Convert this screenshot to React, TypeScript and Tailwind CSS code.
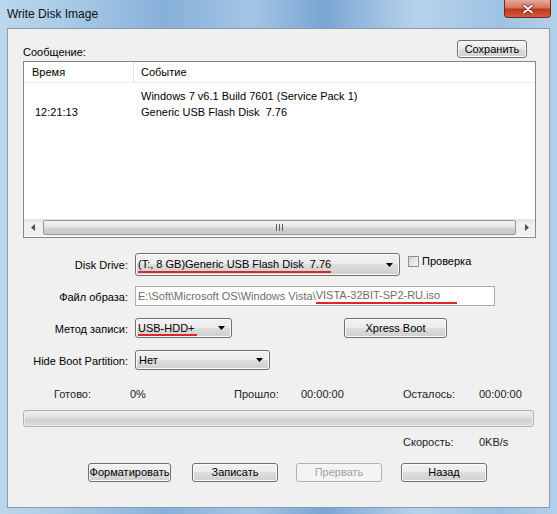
import React from 'react';

const face =
  'flex items-center rounded-[3px] border border-[#707070] bg-[linear-gradient(to_bottom,#f2f2f2_0%,#ebebeb_49%,#dddddd_50%,#cfcfcf_100%)] shadow-[inset_0_0_0_1px_#fbfbfb]';
const btn = `${face} justify-center`;

function DownArrow() {
  return (
    <svg width="7" height="4" viewBox="0 0 7 4">
      <path d="M0 0h7L3.5 4z" fill="#000" />
    </svg>
  );
}

function Combo({ className, children }: { className: string; children: React.ReactNode }) {
  return (
    <div className={`${face} ${className} justify-between pl-[2px] pr-[6px]`}>
      <span className="whitespace-pre leading-[13px]">{children}</span>
      <DownArrow />
    </div>
  );
}

function FormRow({ label, children, className = '' }: { label: string; children: React.ReactNode; className?: string }) {
  return (
    <div className={`flex items-center ${className}`}>
      <span className="w-[105px] text-right pt-[2px] leading-[13px] shrink-0">{label}</span>
      <div className="ml-[7px] flex items-center">{children}</div>
    </div>
  );
}

export default function App() {
  return (
    <div className="w-[557px] h-[514px] flex flex-col overflow-hidden px-[7px] pb-[6px] font-['Liberation_Sans',Arial,sans-serif] text-[11px] text-black bg-[linear-gradient(90deg,#bcd7ec_0%,#a9cae6_12%,#87b0d9_30%,#a4c6e5_45%,#7aa6d3_58%,#b7d3eb_75%,#9dc2e3_90%,#b3d0ea_100%)]">
      {/* Title bar */}
      <div className="h-[28px] flex items-start justify-between shrink-0">
        <span className="pt-[7px] text-[12px] leading-[14px] text-[#111]">Write Disk Image</span>
        <div className="w-[47px] h-[18px] -mr-[1px] flex items-center justify-center rounded-b-[4px] border border-t-0 border-[#6e2a22] bg-[linear-gradient(to_bottom,#e9a99c_0%,#d9735f_45%,#c0361f_55%,#d45a43_100%)]">
          <svg width="12" height="10" viewBox="0 0 12 10">
            <path d="M2 1.5l8 7M10 1.5l-8 7" stroke="#5a1a12" strokeWidth="3.2" strokeLinecap="round" />
            <path d="M2 1.5l8 7M10 1.5l-8 7" stroke="#fff" strokeWidth="2" strokeLinecap="round" />
          </svg>
        </div>
      </div>

      {/* Client area */}
      <div className="flex-1 flex flex-col bg-[#f0f0f0] border border-[#8a9bb0] pl-[15px] pr-[13px]">
        {/* Message header */}
        <div className="flex items-start justify-between mt-[11px] h-[18px]">
          <span className="mt-[6px] leading-[13px]">Сообщение:</span>
          <div className={`${btn} w-[70px] h-[18px] mr-[9px]`}>Сохранить</div>
        </div>

        {/* Log list */}
        <div className="mt-[3px] h-[177px] bg-white border border-[#828790] flex flex-col">
          <div className="h-[21px] flex shrink-0 border-b border-[#efefef]">
            <div className="w-[110px] border-r border-[#e3e3e3] pl-[8px] flex items-center">Время</div>
            <div className="pl-[7px] flex items-center">Событие</div>
          </div>
          <div className="flex-1 pt-[5px]">
            <div className="h-[16px] flex items-center">
              <span className="w-[110px] pl-[11px]"></span>
              <span className="pl-[7px]">Windows 7 v6.1 Build 7601 (Service Pack 1)</span>
            </div>
            <div className="h-[16px] flex items-center">
              <span className="w-[110px] pl-[11px]">12:21:13</span>
              <span className="pl-[7px] whitespace-pre">Generic USB Flash Disk  7.76</span>
            </div>
          </div>
          {/* Horizontal scrollbar */}
          <div className="h-[17px] mb-[1px] flex items-stretch bg-[linear-gradient(to_bottom,#e3e3e3,#f0f0f0_30%,#f0f0f0)]">
            <div className="w-[17px] flex items-center justify-center">
              <svg width="4" height="7" viewBox="0 0 4 7">
                <path d="M4 0v7L0 3.5z" fill="#505050" />
              </svg>
            </div>
            <div className="flex-1 mx-[2px] my-[1px] rounded-[2px] border border-[#979797] bg-[linear-gradient(to_bottom,#f4f4f4_0%,#e6e6e6_45%,#d3d3d3_55%,#c8c8c8_100%)] flex items-center justify-center gap-[2px]">
              <span className="w-[1px] h-[7px] bg-[#606060]" />
              <span className="w-[1px] h-[7px] bg-[#606060]" />
              <span className="w-[1px] h-[7px] bg-[#606060]" />
            </div>
            <div className="w-[17px] flex items-center justify-center">
              <svg width="4" height="7" viewBox="0 0 4 7">
                <path d="M0 0v7L4 3.5z" fill="#505050" />
              </svg>
            </div>
          </div>
        </div>

        {/* Form */}
        <FormRow label="Disk Drive:" className="mt-[15px]">
          <Combo className="w-[265px] h-[23px]">
            <span className="border-b-2 border-[#e0242c] pb-[1px]">(T:, 8 GB)Generic USB Flash Disk  7.76</span>
          </Combo>
          <div className="ml-[8px] self-start mt-[3px] w-[11px] h-[11px] border border-[#8f8f8f] bg-[linear-gradient(135deg,#d6d6d6,#f7f7f7)]" />
          <span className="ml-[3px] leading-[13px] self-start mt-[2px]">Проверка</span>
        </FormRow>

        <FormRow label="Файл образа:" className="mt-[10px]">
          <div className="w-[360px] h-[20px] bg-white border border-[#abadb3] flex items-center pl-[2px] text-[#6d6d6d] whitespace-pre">
            <span>E:\Soft\Microsoft OS\Windows Vista\</span>
            <span className="border-b-2 border-[#e0242c] pr-[17px] leading-[13px]">VISTA-32BIT-SP2-RU.iso</span>
          </div>
        </FormRow>

        <FormRow label="Метод записи:" className="mt-[12px]">
          <Combo className="w-[97px] h-[20px]">
            <span className="border-b-2 border-[#e0242c] pr-[2px]">USB-HDD+</span>
          </Combo>
          <div className={`${btn} ml-[112px] w-[103px] h-[20px]`}>Xpress Boot</div>
        </FormRow>

        <FormRow label="Hide Boot Partition:" className="mt-[12px]">
          <Combo className="w-[135px] h-[20px]">
            <span className="pl-[1px]">Нет</span>
          </Combo>
        </FormRow>

        {/* Status */}
        <div className="mt-[17px] flex leading-[14px] text-[#222]">
          <span className="ml-[31px] w-[76px]">Готово:</span>
          <span className="w-[104px]">0%</span>
          <span className="w-[67px]">Прошло:</span>
          <span className="w-[102px]">00:00:00</span>
          <span className="w-[76px]">Осталось:</span>
          <span>00:00:00</span>
        </div>

        <div className="mt-[9px] mr-[2px] h-[17px] rounded-[3px] border border-[#b2b2b2] bg-[linear-gradient(to_bottom,#f3f3f3_0%,#e2e2e2_40%,#d0d0d0_60%,#dedede_100%)] shadow-[inset_0_0_0_1px_#ececec]" />

        <div className="mt-[8px] flex leading-[14px] text-[#222]">
          <span className="ml-[380px] w-[76px]">Скорость:</span>
          <span>0KB/s</span>
        </div>

        {/* Buttons */}
        <div className="mt-[14px] flex ml-[65px]">
          <div className={`${btn} w-[83px] h-[19px] border-[#2b2b2b]`}>Форматировать</div>
          <div className={`${btn} ml-[21px] w-[86px] h-[19px]`}>Записать</div>
          <div className="ml-[18px] w-[86px] h-[19px] flex items-center justify-center rounded-[3px] border border-[#adb2b5] bg-[#f4f4f4] text-[#a0a0a0]">
            Прервать
          </div>
          <div className={`${btn} ml-[19px] w-[86px] h-[19px]`}>Назад</div>
        </div>
      </div>
    </div>
  );
}
